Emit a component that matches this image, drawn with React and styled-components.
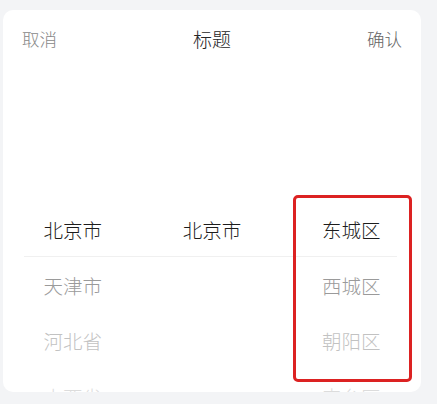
import React from 'react';
import styled, { createGlobalStyle } from 'styled-components';

const provinces = ['北京市', '天津市', '河北省', '山西省'];
const cities = ['北京市'];
const districts = ['东城区', '西城区', '朝阳区', '丰台区'];

const shades = ['#1c1c1c', '#9a9a9a', '#c2c2c2', '#dcdcdc'];

const App = () => {
  const columns = [provinces, cities, districts];

  return (
    <>
      <GlobalStyle />
      <Card>
        <Header>
          <Action>取消</Action>
          <Title>标题</Title>
          <Action $confirm>确认</Action>
        </Header>
        <Picker>
          {columns.map((items, ci) => (
            <Column key={ci}>
              {items.map((label, i) => (
                <Item key={label + i} $shade={shades[i]}>
                  {label}
                </Item>
              ))}
            </Column>
          ))}
          <Divider />
          <Highlight />
        </Picker>
      </Card>
    </>
  );
};

export default App;

const GlobalStyle = createGlobalStyle`
  body {
    margin: 0;
    background: #f3f4f6;
    font-family: 'Noto Sans CJK SC', 'Noto Sans', sans-serif;
  }
`;

const Card = styled.div`
  margin: 10px 0 0 3px;
  width: 418px;
  height: 382px;
  background: #fff;
  border-radius: 10px;
  overflow: hidden;
  display: flex;
  flex-direction: column;
`;

const Header = styled.div`
  height: 56px;
  padding: 0 19px;
  display: flex;
  align-items: center;
  justify-content: space-between;
  flex-shrink: 0;
`;

const Action = styled.span`
  font-size: 17.5px;
  font-weight: 300;
  color: ${p => (p.$confirm ? '#646464' : '#888888')};
`;

const Title = styled.span`
  font-size: 19px;
  font-weight: 300;
  color: #262626;
`;

const Picker = styled.div`
  position: relative;
  flex: 1;
  display: grid;
  grid-template-columns: repeat(3, 1fr);
  padding-top: 136px;
`;

const Column = styled.div`
  display: flex;
  flex-direction: column;
`;

const Item = styled.div`
  height: 55.5px;
  display: flex;
  align-items: center;
  justify-content: center;
  font-size: 19.5px;
  font-weight: 300;
  color: ${p => p.$shade};
  flex-shrink: 0;
`;

const Divider = styled.div`
  position: absolute;
  left: 21px;
  right: 24px;
  top: 190px;
  height: 1px;
  background: #f0f0f0;
`;

const Highlight = styled.div`
  position: absolute;
  left: 290px;
  top: 129px;
  width: 119px;
  height: 187px;
  box-sizing: border-box;
  border: 3px solid #dc2222;
  border-radius: 5px;
`;
